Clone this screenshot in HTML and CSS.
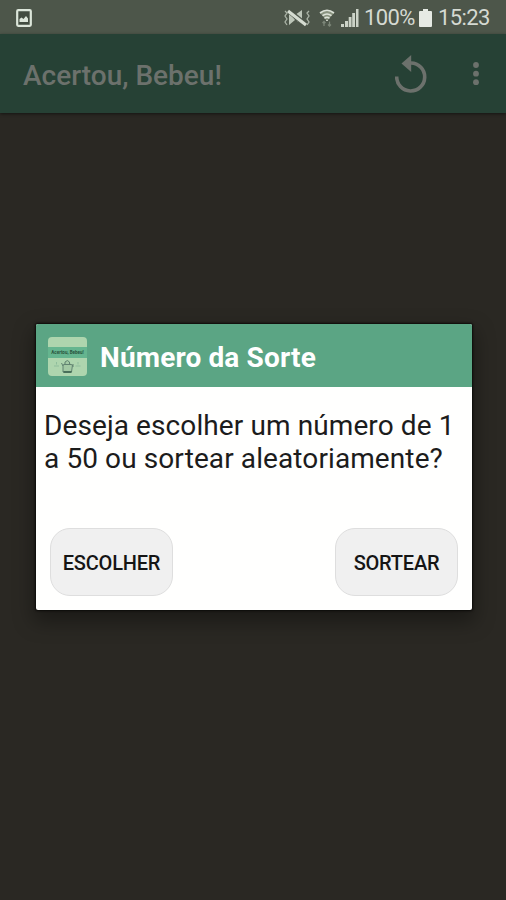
FILE: index.html
```html
<!DOCTYPE html>
<html lang="pt-BR">
<head>
  <title>Acertou, Bebeu!</title>
  <meta charset="UTF-8">
  <meta name="viewport" content="width=device-width, initial-scale=1.0">
  <link rel="stylesheet" href="styles.css">
</head>
<body>
<div class="status-bar">
  <svg class="icon-image" width="16" height="18" viewBox="0 0 16 18">
    <rect x="1.2" y="1.2" width="13.6" height="15.6" rx="1" fill="#424c40" stroke="#dce6da" stroke-width="2.2"/>
    <path d="M3.5 13V10l2-1.5 2 1.5 2.5-3 2 2.5V13z" fill="#dce6da"/>
  </svg>
  <div class="status-right">
    <svg class="icon-mute" width="26" height="18" viewBox="0 0 26 18">
      <path d="M5 3v13l6-5zM11 6l7-5v14l-5-3z" fill="#bcc5b8"/>
      <path d="M5 2l17 14" stroke="#4d564a" stroke-width="5"/>
      <path d="M4 2l18 14" stroke="#d5dcd1" stroke-width="3.2"/>
      <path d="M1 2l2 2-2 3 2 3-2 3 2 3M25 2l-2 2 2 3-2 3 2 3-2 3" fill="none" stroke="#aab3a6" stroke-width="1.3"/>
    </svg>
    <svg class="icon-wifi" width="16" height="18" viewBox="0 0 16 18">
      <path d="M1 4Q8-1.500 15 4L8 12z" fill="#89937f"/>
      <path d="M1 4Q8-1.500 15 4M3.500 6.700q4.500-3.500 9 0M5.500 9.300q2.500-2 5 0M8 11v1" fill="none" stroke="#dce2d8" stroke-width="1.600"/>
      <path d="M5 12.500V17M3.500 14L5 12.500l1.500 1.500M10.500 12.500V17M9 15.500l1.500 1.500 1.500-1.500" fill="none" stroke="#7c8678" stroke-width="1.300"/>
    </svg>
    <svg class="icon-signal" width="18" height="18" viewBox="0 0 18 18">
      <path d="M0 15h3v3H0zM4 12h3v6H4zM7.700 8h2.800v10H7.700zM11.200 4H14v14h-2.800zM15 0h2.500v18H15z" fill="#cbd2c7"/>
    </svg>
    <span class="battery-text">100%</span>
    <svg class="icon-battery" width="13" height="18" viewBox="0 0 13 18">
      <path d="M4 0h5v2h3q1 0 1 1v14q0 1-1 1H1q-1 0-1-1V3q0-1 1-1h3z" fill="#e6eae4"/>
    </svg>
    <span class="clock">15:23</span>
  </div>
</div>

<div class="app-bar">
  <h1>Acertou, Bebeu!</h1>
  <svg class="icon-replay" width="32" height="38" viewBox="0 0 32 38">
    <path d="M1.700 21.500A14 14 0 1 0 16 8" fill="none" stroke="#6c716c" stroke-width="3.600"/>
    <path d="M16.200 0v17L6.500 8.500z" fill="#6c716c"/>
  </svg>
  <svg class="icon-more" width="6" height="24" viewBox="0 0 6 24">
    <circle cx="3" cy="3" r="2.900" fill="#6c716c"/>
    <circle cx="3" cy="11.700" r="2.900" fill="#6c716c"/>
    <circle cx="3" cy="20.200" r="2.900" fill="#6c716c"/>
  </svg>
</div>

<div class="content">
  <div class="dialog">
    <div class="dialog-header">
      <div class="app-icon">
        <div class="app-icon-title">Acertou, Bebeu!</div>
        <svg width="39" height="18" viewBox="0 0 39 18">
          <path d="M15 14V7l2-1V4q2.500-3 4.500 0v2l3 1-1 7z" fill="#a3c9a4" stroke="#618370" stroke-width="1"/>
          <path d="M13.500 5l1.500 3M25 6v3M16 6.500h7" stroke="#618370" stroke-width="1"/>
          <path d="M15.500 14h8" stroke="#345c48" stroke-width="1.500"/>
          <path d="M8.500 4v2.500M6 8h5M30 4v2.500M27.500 8h5" stroke="#8fbd9c" stroke-width="1"/>
        </svg>
      </div>
      <h2>Número da Sorte</h2>
    </div>
    <p>Deseja escolher um número de 1<br>a 50 ou sortear aleatoriamente?</p>
    <div class="buttons">
      <button class="btn">ESCOLHER</button>
      <button class="btn">SORTEAR</button>
    </div>
  </div>
</div>
</body>
</html>
```
FILE: styles.css
```css
* {
  box-sizing: border-box;
}

body {
  margin: 0;
  height: 100vh;
  display: flex;
  flex-direction: column;
  background-color: #2a2823;
  font-family: Roboto, "Liberation Sans", sans-serif;
  overflow: hidden;
}

svg {
  display: block;
  flex-shrink: 0;
}

.status-bar {
  height: 34px;
  flex-shrink: 0;
  display: flex;
  justify-content: space-between;
  align-items: center;
  padding: 1px 16px 0 16px;
  background-color: #4d564a;
  color: #d5dad2;
}

.status-right {
  display: flex;
  align-items: center;
  font-size: 22px;
  line-height: 34px;
  white-space: nowrap;
}

.icon-wifi {
  margin-left: 9px;
}

.icon-signal {
  margin-left: 6px;
}

.battery-text {
  width: 52px;
  margin-left: 5px;
  letter-spacing: -0.6px;
}

.icon-battery {
  margin-left: 3px;
}

.clock {
  width: 52px;
  margin-left: 6px;
  letter-spacing: -0.6px;
}

.app-bar {
  height: 79px;
  flex-shrink: 0;
  display: flex;
  align-items: center;
  padding: 0 27px 0 23px;
  background-color: #264135;
  box-shadow: 0 1px 3px rgba(0, 0, 0, 0.5);
}

h1 {
  flex: 1;
  margin: 4px 0 0;
  color: #6c716c;
  font-size: 28px;
  font-weight: 500;
  line-height: 36px;
  white-space: nowrap;
}

.icon-replay {
  margin-right: 46px;
}

.content {
  flex: 1;
  display: flex;
  justify-content: center;
  align-items: flex-start;
  padding: 211px 0 0 2px;
}

.dialog {
  width: 436px;
  height: 286px;
  border-radius: 2px;
  background-color: #fffffe;
  overflow: hidden;
  box-shadow: 0 0 2px 1px #0c0b09, 0 9px 20px 3px rgba(0, 0, 0, 0.35);
}

.dialog-header {
  height: 63px;
  display: flex;
  align-items: center;
  padding-left: 12px;
  background-color: #5ba584;
}

.app-icon {
  width: 39px;
  height: 39px;
  padding-top: 10px;
  margin-top: 1px;
  border-radius: 4px;
  background-color: #aed5ae;
  overflow: hidden;
}

.app-icon-title {
  height: 11px;
  background-color: #65b58f;
  color: #28543e;
  font-size: 4.5px;
  font-weight: 700;
  line-height: 11px;
  text-align: center;
  white-space: nowrap;
}

h2 {
  margin: 5px 0 0 13px;
  color: #fff;
  font-size: 28px;
  font-weight: 700;
  line-height: 36px;
  letter-spacing: 0.15px;
  white-space: nowrap;
}

p {
  height: 141px;
  margin: 0;
  padding: 22px 0 0 8px;
  color: #1c1c1c;
  font-size: 28px;
  line-height: 33px;
  letter-spacing: 0.1px;
  white-space: nowrap;
}

.buttons {
  display: flex;
  justify-content: space-between;
  padding: 0 14px;
}

.btn {
  width: 123px;
  height: 68px;
  padding: 2px 0 0;
  border: 1px solid #dedede;
  border-radius: 20px;
  background-color: #f0f0f0;
  color: #151515;
  font-family: inherit;
  font-size: 20px;
  font-weight: 500;
  letter-spacing: -0.2px;
}
```
